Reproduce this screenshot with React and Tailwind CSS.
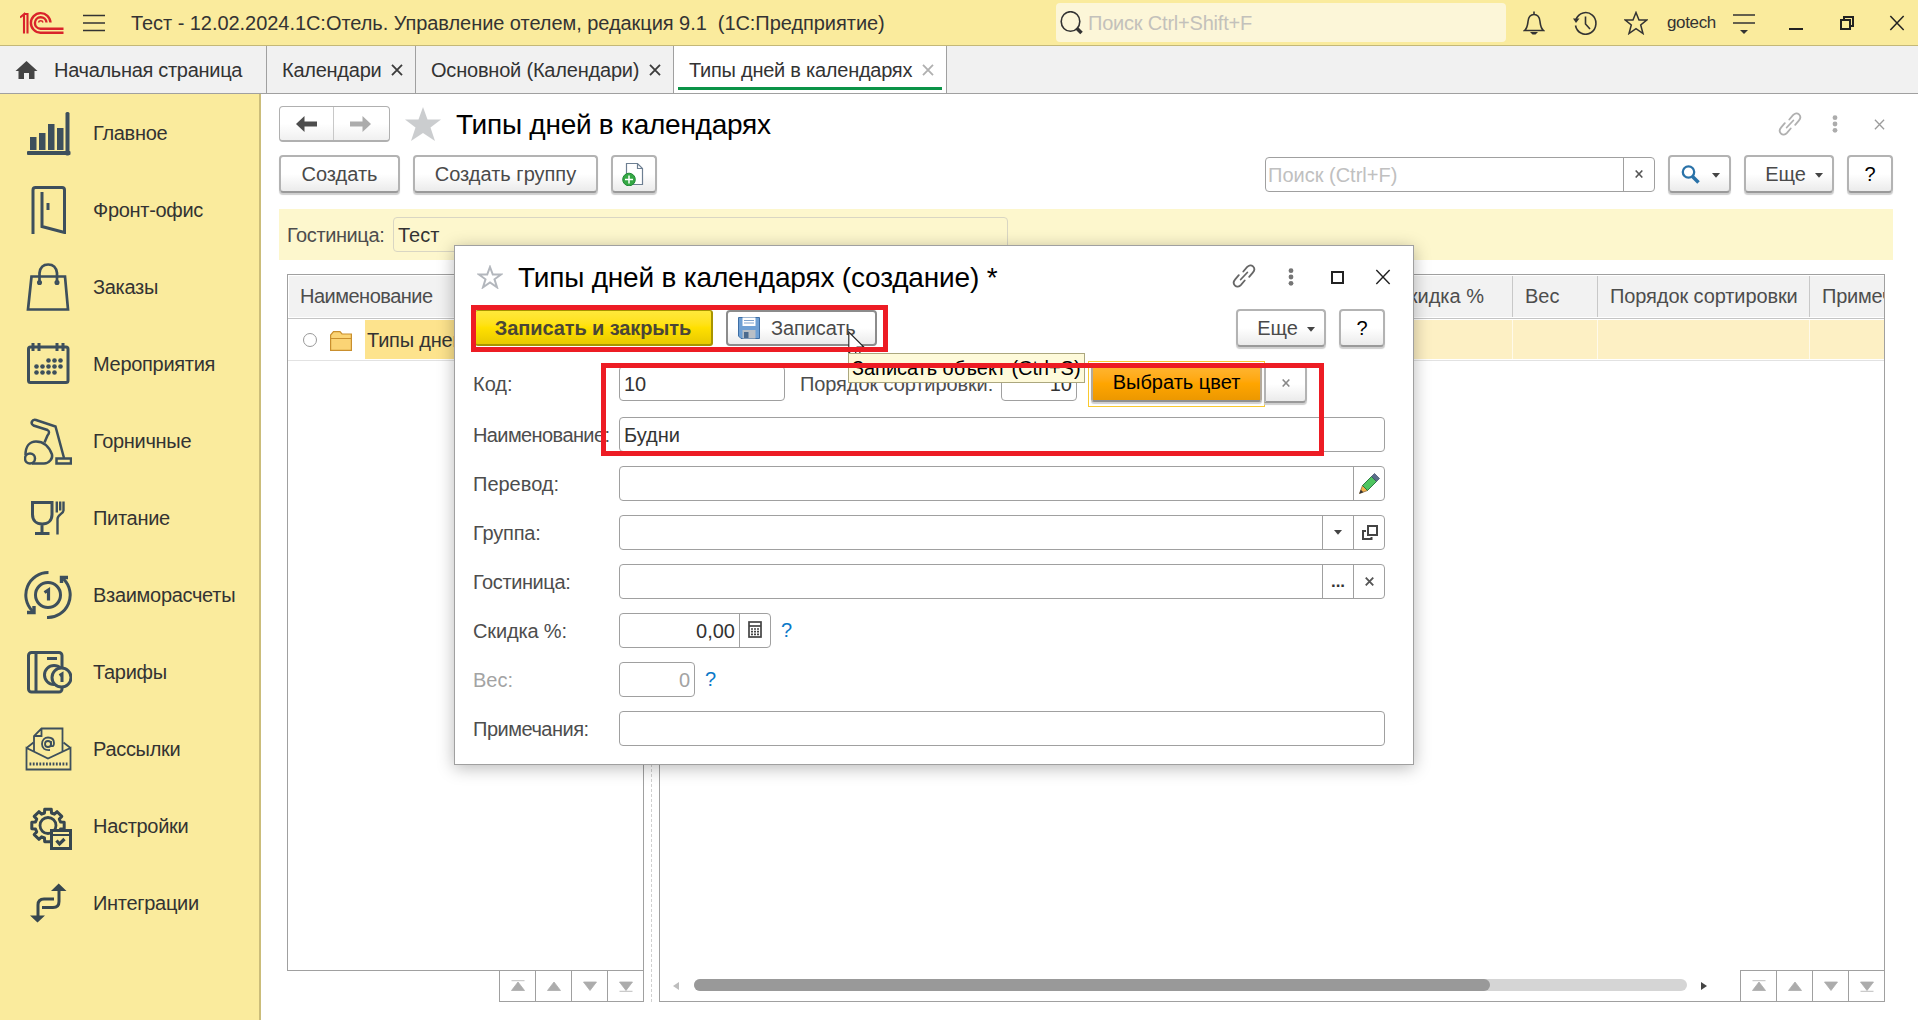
import React from "react";

const MENU = [
    { label: "Главное", icon: "chart" },
    { label: "Фронт-офис", icon: "door" },
    { label: "Заказы", icon: "bag" },
    { label: "Мероприятия", icon: "calendar" },
    { label: "Горничные", icon: "vacuum" },
    { label: "Питание", icon: "food" },
    { label: "Взаиморасчеты", icon: "settlement" },
    { label: "Тарифы", icon: "tariff" },
    { label: "Рассылки", icon: "mail" },
    { label: "Настройки", icon: "gear" },
    { label: "Интеграции", icon: "integration" },
];

// outline of a gear with eight teeth
const gearPath = (cx, cy, inner, outer) => {
    const points = [];
    for (let i = 0; i < 8; i++) {
        const a = (i * Math.PI) / 4;
        [[-0.27, inner], [-0.2, outer], [0.2, outer], [0.27, inner]].forEach(([shift, r]) => {
            points.push(`${(cx + r * Math.sin(a + shift)).toFixed(1)} ${(cy - r * Math.cos(a + shift)).toFixed(1)}`);
        });
    }
    return `M${points.join("L")}z`;
};

const MENU_ICONS = {
    chart: (
        <g fill="#3d4f5c" stroke="none">
            <rect x="6" y="28" width="6.500" height="13" />
            <rect x="15" y="24" width="6.500" height="17" />
            <rect x="24" y="15" width="6.500" height="26" />
            <rect x="33" y="19" width="6.500" height="22" />
            <rect x="41.500" y="3" width="4" height="43.500" rx="1.500" />
            <rect x="3" y="42" width="43.500" height="4" rx="1" />
        </g>
    ),
    door: (
        <g>
            <path d="M9 48V4q0-2.500 2.500-2.500h26.500q2.500 0 2.500 2.500v42.500L18 40.500V6" />
            <path d="M24 17v7" strokeWidth="3" />
        </g>
    ),
    bag: (
        <g strokeWidth="2.700">
            <path d="M7.500 13.500h33.500L44 46.500H4z" />
            <path d="M15.500 19v-9q1-8.500 8.700-8.500T33 10v9" />
            <circle cx="15.500" cy="19.500" r="1.200" />
            <circle cx="33" cy="19.500" r="1.200" />
        </g>
    ),
    calendar: (
        <g>
            <rect x="4.500" y="7" width="39.500" height="35.500" rx="2" />
            <path d="M9 3v8M15 3v8M33 3v8M39 3v8" />
            <g fill="#3d4f5c" stroke="none">
                {[24.5, 30.5, 36.5].map((x) => <circle key={x} cx={x} cy="20.500" r="2.300" />)}
                {[12.5, 18.5, 24.5, 30.5, 36.5].map((x) => <circle key={x} cx={x} cy="26.500" r="2.300" />)}
                {[12.5, 18.5, 24.5, 30.5].map((x) => <circle key={x} cx={x} cy="32.500" r="2.300" />)}
            </g>
        </g>
    ),
    vacuum: (
        <g strokeWidth="2.500">
            <path d="M40 41L31.500 9.500 12 3C8 2 6 6.500 9.500 8.500l14 4.500c2 1 2 3 0 5.500l-3 7" />
            <path d="M1.500 38C1.500 29 6 24.500 12 24.500c8 0 13 5 16 13 1 4-3 9-8 9H8" />
            <circle cx="6" cy="41.500" r="5" />
            <path d="M32.500 41.500h14.500v5H32.500z" />
        </g>
    ),
    food: (
        <g>
            <path d="M8.500 8.500h19.500v12c0 6-4 9.500-9.800 9.500S8.500 26.500 8.500 20.500zM18 30v9M11 39.500h14.500" />
            <path d="M32.800 7.500v11M39.500 7.500v9c0 3-6 4-6 8.500v15.500M36.200 7.500v9" strokeWidth="2.400" />
        </g>
    ),
    settlement: (
        <g>
            <circle cx="24" cy="24" r="12.500" />
            <path d="M24.500 1.500A22.500 22.500 0 0 0 8.500 40M23 46.500A22.500 22.500 0 0 0 39.500 8" />
            <path d="M37.500 12V6.500H44M10 35v6.500H3" strokeWidth="3.400" />
            <path d="M20.500 21.500L24.500 19v10.500" strokeWidth="3.200" />
        </g>
    ),
    tariff: (
        <g>
            <rect x="4.500" y="4.500" width="33.500" height="39.500" rx="3" />
            <path d="M12 4.500V44M23 10.500h10" />
            <circle cx="30" cy="27" r="9.500" fill="#faeb9d" />
            <circle cx="37.500" cy="29.500" r="9.500" fill="#faeb9d" />
            <path d="M35.500 27.500l2.500-1.500v8" />
        </g>
    ),
    mail: (
        <g strokeWidth="1.800">
            <path d="M2.500 23v21.500h44V23L24 33.500zM2.500 23l7-5.500M46.500 23l-7-5.500" />
            <path d="M10 26V11l7.500-7.500h21V26M17.500 3.500V11H10" />
            <path d="M5.500 39h38" strokeWidth="3" strokeDasharray="1.800 1.500" />
            <circle cx="24" cy="19" r="3" />
            <path d="M27 16v5q3 1 3-3c0-4-3-5.500-6-5.500s-6 2-6 6.500 3 6.500 8 6" />
        </g>
    ),
    gear: (
        <g stroke="#37474f">
            <path d={gearPath(24, 23.5, 13, 16.5)} strokeWidth="3" strokeLinejoin="round" />
            <circle cx="24" cy="23.500" r="8" strokeWidth="2.800" />
            <rect x="27.500" y="28.500" width="19" height="18" fill="#faeb9d" strokeWidth="3" />
            <path d="M27.500 33h19" strokeWidth="2" />
            <path d="M32.500 38.500l3 3.500 5-5" strokeWidth="3.200" />
        </g>
    ),
    integration: (
        <g stroke="#37474f">
            <path d="M30 20H20q-6 0-6 6v11M18 28.500h11q6 0 6-6V11" strokeWidth="3" />
            <path d="M34.700 4.500L42.500 12H27zM13.500 43.500L6 36.500h15z" fill="#37474f" stroke="none" />
        </g>
    ),
};

const MenuIcon = ({ name }) => (
    <svg width="48" height="48" viewBox="0 0 48 48" fill="none" stroke="#3d4f5c" strokeWidth="3">
        {MENU_ICONS[name]}
    </svg>
);

const Cross = ({ size = 12, color = "#3c3c3c", width = 1.8 }) => (
    <svg width={size} height={size} viewBox="0 0 12 12" className="shrink-0" stroke={color} strokeWidth={(width * 12) / size}>
        <path d="M1 .8l10 10.400M11 .8L1 11.200" />
    </svg>
);

const LinkIcon = ({ color }) => (
    <svg width="24" height="24" viewBox="0 0 24 24" fill="none" stroke={color} strokeWidth="1.800" strokeLinecap="round">
        <path d="M11.300 7.500l3.700-4.300c2-2.200 4.300-2.400 6-.8s1.700 4-.2 6.200l-3.600 4.200M12.700 16.500L9 20.800c-2 2.200-4.300 2.400-6 .8s-1.700-4 .2-6.200l3.600-4.200M8.700 15.500l6.600-7" />
    </svg>
);

const Dots = ({ color }) => (
    <svg width="6" height="18" viewBox="0 0 6 18" fill={color}>
        <circle cx="3" cy="2.700" r="2.400" />
        <circle cx="3" cy="9" r="2.400" />
        <circle cx="3" cy="15.300" r="2.400" />
    </svg>
);

const Caret = ({ className = "" }) => (
    <svg width="8" height="5" viewBox="0 0 8 5" fill="#444" className={className}>
        <path d="M0 0h8L4 4.800z" />
    </svg>
);

const Button = ({ className = "", children }) => (
    <button
        className={`flex h-[38px] shrink-0 items-center justify-center rounded-[4px] border-2 border-[#b3b3b3] border-b-[#9a9a9a] bg-gradient-to-b from-white from-50% to-[#ebebeb] text-[#4a4a4a] shadow-[0_2px_1px_#cfcfcf] ${className}`}
    >
        {children}
    </button>
);

const PAGER_ARROWS = [
    "M13 2l6.500 8.500h-13z M6.500 .7h13",
    "M13 2l6.500 8.500h-13z",
    "M13 10.500L6.500 2h13z",
    "M13 10.500L6.500 2h13z M6.500 11.300h13",
];

const PagerButtons = () => (
    <div className="flex h-[32px] w-[145px] divide-x divide-[#a0a0a0] border border-[#a0a0a0] bg-white">
        {PAGER_ARROWS.map((d) => (
            <div key={d} className="flex flex-1 items-center justify-center">
                <svg width="26" height="12" viewBox="0 0 26 12" fill="#acacac" stroke="#acacac" strokeWidth=".8">
                    <path d={d} />
                </svg>
            </div>
        ))}
    </div>
);

function TitleBar() {
    return (
        <header className="flex h-[46px] shrink-0 items-center border-b border-[#c4b878] bg-[#faeb9d]">
            <svg width="44" height="24" viewBox="0 0 44 24" fill="none" stroke="#d9232b" strokeWidth="2.400" className="ml-[20px]">
                <path d="M0 6.500l4-3.300v19.300M3.500 3h4v19.500" strokeWidth="2.100" />
                <path d="M30.500 11.500A9.800 9.800 0 1 0 20.500 21.700H43.500" />
                <path d="M26.500 11.500a5.800 5.800 0 1 0-6 6.300H43.500" />
                <path d="M23 11.500a2.300 2.300 0 0 0-4.500 0" strokeWidth="1.500" />
            </svg>
            <svg width="22" height="18" viewBox="0 0 22 18" stroke="#333" strokeWidth="1.600" className="ml-[19px]">
                <path d="M0 1.500h22M0 9h22M0 16.500h22" />
            </svg>
            <h1 className="ml-[26px] w-[925px] whitespace-pre tracking-[-0.05px]">
                {"Тест - 12.02.2024.1С:Отель. Управление отелем, редакция 9.1  (1С:Предприятие)"}
            </h1>
            <div className="flex h-[39px] w-[450px] items-center gap-[5px] rounded-[4px] bg-[#fcf6d8] pl-[4px] text-[#c3c1bb]">
                <svg width="23" height="24" viewBox="0 0 23 24" fill="none" stroke="#333">
                    <ellipse cx="10.500" cy="10.500" rx="9.300" ry="9.800" strokeWidth="1.600" />
                    <path d="M16.500 17l5 5" strokeWidth="3.500" />
                </svg>
                <span className="tracking-[-0.2px]">Поиск Ctrl+Shift+F</span>
            </div>
            <svg width="22" height="24" viewBox="0 0 22 24" fill="none" stroke="#333" strokeWidth="1.600" className="ml-[17px]">
                <path d="M11 .5v2.500M1.500 19.500h19c-3-2.500-3-5-3.500-9-.5-5-3-7-6-7s-5.500 2-6 7c-.5 4-.5 6.500-3.500 9z" />
                <path d="M7 21h8l-2.500 2.500h-3z" fill="#333" stroke="none" />
            </svg>
            <svg width="24" height="24" viewBox="0 0 24 24" fill="none" stroke="#333" strokeWidth="1.600" className="ml-[28px]">
                <path d="M3 8.500a10.300 10.800 0 1 1-.5 6M12.500 5.500V13l4.500 5" />
                <path d="M0 7.500h6.500L3 12z" fill="#333" stroke="none" />
            </svg>
            <svg width="24" height="24" viewBox="0 0 24 24" fill="none" stroke="#333" strokeWidth="1.500" className="ml-[27px]">
                <path d="M12 1.500l3 7.500h7.700l-6 5 2.300 8.500L12 17.700 5 22.500 7.300 14l-6-5H9z" />
            </svg>
            <span className="ml-[19px] w-[66px] text-[17px] tracking-[-0.35px]">gotech</span>
            <svg width="22" height="20" viewBox="0 0 22 20" stroke="#333" strokeWidth="1.600" className="mt-[2px]">
                <path d="M0 1h22M0 9h22" />
                <path d="M7 16h8l-4 4z" fill="#333" stroke="none" />
            </svg>
            <span className="mt-[13px] ml-[34px] h-[2px] w-[14px] bg-[#222]" />
            <svg width="14" height="14" viewBox="0 0 14 14" fill="none" stroke="#222" strokeWidth="2" className="ml-[37px]">
                <path d="M1 4h9v9H1zM4 3.500V1h9v9h-3" />
            </svg>
            <span className="ml-[35px]">
                <Cross size={16} color="#222" width={1.5} />
            </span>
        </header>
    );
}

function Tabs() {
    return (
        <nav className="flex h-[48px] shrink-0 border-b border-[#a0a0a0] bg-[#f1f1f1]">
            <div className="flex w-[267px] items-center gap-[16px] border-r border-[#a0a0a0] pl-[15px]">
                <svg width="23" height="18" viewBox="0 0 22 18" fill="#444">
                    <path d="M11 0L0 10h3v8h5.500v-6h5v6H19v-8h3z" />
                </svg>
                <span className="tracking-[-0.3px]">Начальная страница</span>
            </div>
            <div className="flex w-[149px] items-center border-r border-[#a0a0a0] pl-[15px]">
                <span className="w-[109px] tracking-[-0.25px]">Календари</span>
                <Cross />
            </div>
            <div className="flex w-[258px] items-center border-r border-[#a0a0a0] pl-[15px]">
                <span className="w-[218px] tracking-[-0.2px]">Основной (Календари)</span>
                <Cross />
            </div>
            <div className="flex w-[273px] flex-col border-r border-[#a0a0a0] bg-white px-[4px]">
                <div className="flex h-[44px] items-center border-b-[3px] border-[#0b9347] pt-[6px] pl-[11px]">
                    <span className="w-[233px] tracking-[-0.25px]">Типы дней в календарях</span>
                    <Cross color="#b0b0b0" />
                </div>
            </div>
        </nav>
    );
}

function Sidebar() {
    return (
        <aside className="w-[261px] shrink-0 border-r-2 border-[#cbbd7a] bg-[#faeb9d]">
            {MENU.map((item) => (
                <div key={item.label} className="flex h-[77px] items-center gap-[21px] pl-[24px]">
                    <MenuIcon name={item.icon} />
                    <span className="tracking-[-0.3px]">{item.label}</span>
                </div>
            ))}
        </aside>
    );
}

function ListPage() {
    return (
        <main className="flex min-w-0 flex-1 flex-col pt-[12px] pr-[25px] pl-[18px]">
            <div className="flex h-[36px] items-center">
                <div className="flex h-[36px] w-[111px] rounded-[4px] border border-[#b0b0b0] border-b-2 bg-gradient-to-b from-white from-50% to-[#f0f0f0]">
                    <div className="flex flex-1 items-center justify-center border-r border-[#c8c8c8]">
                        <svg width="21" height="16" viewBox="0 0 21 16" fill="#4d4d4d">
                            <path d="M0 8l8.500-8v5.500H21v5H8.500V16z" />
                        </svg>
                    </div>
                    <div className="flex flex-1 items-center justify-center pr-[2px]">
                        <svg width="21" height="16" viewBox="0 0 21 16" fill="#acacac">
                            <path d="M21 8l-8.500-8v5.500H0v5h12.500V16z" />
                        </svg>
                    </div>
                </div>
                <svg width="36" height="34" viewBox="0 0 36 34" fill="#cbcdcf" className="ml-[15px]">
                    <path d="M18 0l4.500 12.500H36L25.500 20.500 30 34l-12-8-12 8 4.500-13.500L0 12.500h13.500z" />
                </svg>
                <h2 className="ml-[15px] flex-1 pt-[2px] text-[28px] leading-none tracking-[-0.25px] text-black">Типы дней в календарях</h2>
                <div className="flex items-center pr-[8px]">
                    <LinkIcon color="#b0b0b0" />
                    <span className="mr-[36px] ml-[30px]">
                        <Dots color="#acacac" />
                    </span>
                    <Cross size={11} color="#9c9c9c" width={1.3} />
                </div>
            </div>

            <div className="mt-[13px] flex h-[38px] items-center gap-[13px]">
                <Button className="w-[121px]">Создать</Button>
                <Button className="w-[185px]">Создать группу</Button>
                <Button className="w-[46px]">
                    <svg width="22" height="24" viewBox="0 0 22 24" fill="none" className="ml-[-2px]">
                        <path d="M4.500 1.500h11l5 5v16h-16zM15.500 1.500v5h5" fill="#fff" stroke="#6d7f92" strokeWidth="1.200" />
                        <circle cx="7" cy="17.500" r="6.300" fill="#35a844" stroke="#1f8a35" />
                        <path d="M7 13.500v8M3 17.500h8" stroke="#fff" strokeWidth="1.500" />
                    </svg>
                </Button>
                <div className="ml-auto flex h-[35px] w-[390px] divide-x divide-[#a0a0a0] rounded-[4px] border border-[#a0a0a0]">
                    <span className="flex flex-1 items-center pt-[2px] pl-[2px] text-[#c0c0c0]">Поиск (Ctrl+F)</span>
                    <span className="flex w-[30px] items-center justify-center">
                        <Cross size={8} color="#555" width={1.6} />
                    </span>
                </div>
                <Button className="w-[63px] gap-[12px]">
                    <svg width="19" height="19" viewBox="0 0 19 19" fill="none" stroke="#2a72a8" className="ml-[2px]">
                        <circle cx="7.500" cy="7" r="5.700" strokeWidth="2.300" />
                        <path d="M11.500 11.500l6 6" strokeWidth="3.500" />
                    </svg>
                    <Caret className="mt-[3px]" />
                </Button>
                <Button className="w-[90px] gap-[9px] pl-[10px]">
                    Еще
                    <Caret className="mt-[3px]" />
                </Button>
                <Button className="w-[46px] text-black">?</Button>
            </div>

            <div className="mt-[16px] flex h-[51px] items-center bg-[#fdf7cd] pl-[8px]">
                <span className="w-[106px] tracking-[-0.4px] text-[#4d4d4d]">Гостиница:</span>
                <div className="flex h-[35px] w-[615px] items-center rounded-[4px] border border-[#d9d6c3] pl-[4px]">Тест</div>
            </div>

            <div className="mt-[14px] flex h-[728px] pr-[8px] pl-[8px]">
                <div className="flex w-[357px] flex-col items-end">
                    <div className="-mb-px h-[697px] w-full border border-[#a0a0a0]">
                        <div className="flex h-[44px] border-b border-[#c4c4c4] p-px">
                            <div className="flex flex-1 items-center bg-[#f2f2f2] pb-[2px] pl-[11px] tracking-[-0.5px] text-[#4d4d4d]">Наименование</div>
                        </div>
                        <div className="flex h-[42px] items-center border-b border-[#e2e2e2]">
                            <span className="ml-[15px] h-[14px] w-[14px] rounded-full border border-[#999]" />
                            <svg width="22" height="20" viewBox="0 0 22 20" className="mt-[3px] mr-[13px] ml-[13px]">
                                <path d="M.6 19.400V4L3.500.6H10L12 3h9.400v16.400z" fill="#fbd475" stroke="#c98f2e" strokeWidth="1.200" />
                                <path d="M1 7.500h20" stroke="#c98f2e" />
                            </svg>
                            <span className="flex h-[39px] flex-1 items-center overflow-hidden bg-[#fde38d] pl-[2px] tracking-[-0.2px]">Типы дней</span>
                        </div>
                    </div>
                    <PagerButtons />
                </div>
                <div className="w-[15px] pl-[7px]">
                    <div className="h-full w-0 border-l border-dashed border-[#d0d0d0]" />
                </div>
                <div className="flex flex-1 flex-col justify-between border border-[#a0a0a0]">
                    <div>
                        <div className="flex h-[44px] items-stretch border-b border-[#c4c4c4] pt-px pb-px text-[#4d4d4d]">
                            <div className="flex w-[853px] items-center justify-end border-r border-[#c8c8c8] bg-[#f2f2f2] pr-[28px] pb-[2px]">Скидка %</div>
                            <div className="flex w-[85px] items-center border-r border-[#c8c8c8] bg-[#f2f2f2] pb-[2px] pl-[12px]">Вес</div>
                            <div className="flex w-[212px] items-center border-r border-[#c8c8c8] bg-[#f2f2f2] pb-[2px] pl-[12px] tracking-[-0.1px]">Порядок сортировки</div>
                            <div className="flex w-0 flex-1 items-center overflow-hidden bg-[#f2f2f2] pb-[2px] pl-[12px] tracking-[-0.2px]">Примечания</div>
                        </div>
                        <div className="flex h-[42px] items-center border-b border-[#e2e2e2]">
                            <div className="h-[39px] w-[853px] border-r border-[#fffaea] bg-[#fdf0c4]" />
                            <div className="h-[39px] w-[85px] border-r border-[#fffaea] bg-[#fdf0c4]" />
                            <div className="h-[39px] w-[212px] border-r border-[#fffaea] bg-[#fdf0c4]" />
                            <div className="h-[39px] flex-1 bg-[#fdf0c4]" />
                        </div>
                    </div>
                    <div className="-mr-px -mb-px flex items-center">
                        <svg width="6" height="8" viewBox="0 0 6 8" fill="#bdbdbd" className="mb-[1px] ml-[13px]">
                            <path d="M6 0v8L0 4z" />
                        </svg>
                        <div className="mb-[2px] ml-[15px] h-[12px] w-[993px] rounded-full bg-[#d5d5d5]">
                            <div className="h-full w-[796px] rounded-full bg-[#999]" />
                        </div>
                        <svg width="6" height="8" viewBox="0 0 6 8" fill="#444" className="mr-auto mb-[1px] ml-[14px]">
                            <path d="M0 0v8l6-4z" />
                        </svg>
                        <PagerButtons />
                    </div>
                </div>
            </div>
        </main>
    );
}

const Field = ({ className = "", children, buttons = [] }) => (
    <div className={`flex h-[35px] divide-x divide-[#a0a0a0] rounded-[4px] border border-[#a0a0a0] bg-white ${className}`}>
        <span className="flex flex-1 items-center pr-[4px] pl-[4px]">{children}</span>
        {buttons.map((button, i) => (
            <span key={i} className="flex w-[31px] items-center justify-center last:w-[30px]">
                {button}
            </span>
        ))}
    </div>
);

const FormRow = ({ label, labelClass = "text-[#4d4d4d]", children }) => (
    <div className="flex h-[35px] items-center">
        <label className={`w-[146px] shrink-0 whitespace-nowrap ${labelClass}`}>{label}</label>
        {children}
    </div>
);

const PencilIcon = (
    <svg width="21" height="21" viewBox="0 0 21 21">
        <path d="M.5 20.500l3-8 5 5z" fill="#f3b04c" stroke="#7a5a2a" strokeWidth=".7" />
        <path d="M.3 20.700l1.500-4 2.500 2.500z" fill="#333" />
        <path d="M3.500 12.500l9-9 5 5-9 9z" fill="#4fc560" stroke="#23703a" strokeWidth=".9" />
        <path d="M12.500 3.500l3-3 5 5-3 3z" fill="#5b6f8c" stroke="#3d4b61" strokeWidth=".7" />
    </svg>
);

const OpenIcon = (
    <svg width="16" height="15" viewBox="0 0 16 15" fill="none" stroke="#444" strokeWidth="2" className="ml-[2px]">
        <path d="M6 1h9v9H6zM4 6H1v8h8.500v-2" />
    </svg>
);

const CalcIcon = (
    <svg width="14" height="17" viewBox="0 0 14 17" fill="none" stroke="#444" strokeWidth="1.700" className="mb-[2px]">
        <rect x="1" y="1" width="12" height="15" />
        <path d="M1 5h12" />
        <path d="M3 8h8M3 10.700h8M3 13.400h8" strokeDasharray="2 1" />
    </svg>
);

function CreateDialog() {
    return (
        <section className="absolute top-[245px] left-[454px] h-[520px] w-[960px] border border-[#a0a0a0] bg-white pl-[18px] shadow-[0_3px_16px_rgba(0,0,0,0.28)]">
            <div className="flex h-[62px] items-center">
                <svg width="26" height="24" viewBox="0 0 26 24" fill="none" stroke="#b3b7bd" strokeWidth="2" className="ml-[4px]">
                    <path d="M13 2l2.800 7.500H24l-6.500 4.800 2.500 8-7-4.800-7 4.800 2.500-8L2 9.500h8.200z" />
                </svg>
                <h3 className="ml-[15px] flex-1 pt-[2px] text-[28px] leading-none tracking-[-0.18px] text-black">
                    Типы дней в календарях (создание) *
                </h3>
                <span className="mb-[2px]">
                    <LinkIcon color="#666" />
                </span>
                <span className="mr-[37px] ml-[32px]">
                    <Dots color="#757575" />
                </span>
                <span className="mr-[31px] h-[13px] w-[13px] border-2 border-[#222]" />
                <span className="mr-[22px] mb-[1px]">
                    <Cross size={16} color="#222" width={1.4} />
                </span>
            </div>

            <div className="mt-[1px] flex h-[38px] items-center">
                <button className="ml-[2px] h-[36px] w-[238px] rounded-[3px] border-t border-r-2 border-b-2 border-[#a89400] bg-gradient-to-b from-[#ffe93a] via-[#ffe000] to-[#e8c900] font-bold tracking-[-0.1px] text-[#4a4637]">
                    Записать и закрыть
                </button>
                <button className="ml-[13px] flex h-[36px] w-[151px] items-center rounded-[4px] border-2 border-[#8c8c8c] bg-gradient-to-b from-white from-50% to-[#ebebeb] pl-[10px] text-[#4a4a4a]">
                    <svg width="22" height="22" viewBox="0 0 22 22" className="mr-[11px]">
                        <path d="M.5.5h21v21H3L.5 19z" fill="#6fa0d4" stroke="#3d6ea5" />
                        <path d="M4.500.5h13v8.500h-13z" fill="#fff" />
                        <path d="M6 3.500h10M6 6h10" stroke="#7fa3cc" />
                        <path d="M4.500 13h13v8.500h-13z" fill="#b9bfc6" />
                        <path d="M6 15h4.500v6H6z" fill="#4b6a8e" />
                    </svg>
                    <span className="tracking-[-0.1px]">Записать</span>
                </button>
                <Button className="ml-auto w-[90px] gap-[9px] pl-[10px]">
                    Еще
                    <Caret className="mt-[3px]" />
                </Button>
                <Button className="mr-[28px] ml-[13px] w-[46px] text-black">?</Button>
            </div>

            <div className="mt-[19px] flex w-[912px] flex-col gap-[14px]">
                <div className="mb-[2px] flex h-[35px] items-center">
                    <label className="w-[146px] text-[#4d4d4d]">Код:</label>
                    <Field className="w-[166px]">10</Field>
                    <label className="w-[216px] pl-[15px] tracking-[-0.1px] whitespace-nowrap text-[#4d4d4d]">Порядок сортировки:</label>
                    <Field className="w-[76px] text-right">
                        <span className="w-full">10</span>
                    </Field>
                    <div className="-my-[6px] ml-[11px] flex h-[46px] w-[177px] items-center border border-[#f9c92e] pl-[2px]">
                        <button className="h-[37px] w-[171px] rounded-[3px] border-2 border-[#b3a99a] border-b-[#8f8f8f] bg-gradient-to-b from-[#ffb52e] via-[#ffa500] to-[#ec9800] pb-[3px] text-black shadow-[0_2px_1px_#cfcfcf]">
                            Выбрать цвет
                        </button>
                    </div>
                    <Button className="-ml-px h-[36px] w-[43px] rounded-l-none pb-[2px]">
                        <Cross size={8} color="#888" width={1.6} />
                    </Button>
                </div>
                <FormRow label="Наименование:" labelClass="tracking-[-0.6px] text-[#4d4d4d]">
                    <Field className="flex-1">Будни</Field>
                </FormRow>
                <FormRow label="Перевод:">
                    <Field className="flex-1" buttons={[PencilIcon]} />
                </FormRow>
                <FormRow label="Группа:" labelClass="tracking-[-0.2px] text-[#4d4d4d]">
                    <Field className="flex-1" buttons={[<Caret />, OpenIcon]} />
                </FormRow>
                <FormRow label="Гостиница:" labelClass="tracking-[-0.4px] text-[#4d4d4d]">
                    <Field className="flex-1" buttons={[<b className="text-[17px]">...</b>, <Cross size={9} color="#555" />]} />
                </FormRow>
                <FormRow label="Скидка %:" labelClass="tracking-[-0.15px] text-[#4d4d4d]">
                    <Field className="w-[152px] text-right" buttons={[CalcIcon]}>
                        <span className="w-full">0,00</span>
                    </Field>
                    <span className="mb-[2px] ml-[10px] text-[#0a78c8]">?</span>
                </FormRow>
                <FormRow label="Вес:" labelClass="text-[#a3a3a3]">
                    <Field className="w-[76px] text-right text-[#a3a3a3]">
                        <span className="w-full">0</span>
                    </Field>
                    <span className="mb-[2px] ml-[10px] text-[#0a78c8]">?</span>
                </FormRow>
                <FormRow label="Примечания:" labelClass="tracking-[-0.5px] text-[#4d4d4d]">
                    <Field className="flex-1" />
                </FormRow>
            </div>
        </section>
    );
}

export default function App() {
    return (
        <div className="relative flex h-[1020px] w-[1918px] flex-col overflow-hidden bg-white font-['Liberation_Sans',Arial,sans-serif] text-[20px] leading-none text-[#333]">
            <TitleBar />
            <Tabs />
            <div className="flex min-h-0 flex-1">
                <Sidebar />
                <ListPage />
            </div>

            <CreateDialog />

            {/* pointer, hint and highlight frames */}
            <svg width="18" height="28" viewBox="0 0 18 28" className="absolute top-[331px] left-[848px]">
                <path d="M.8 1v21l5-4.500 4 8.500 3.500-1.500-4-8.500h6.500z" fill="#fff" stroke="#222" strokeWidth="1.100" />
            </svg>
            <div className="absolute top-[353px] left-[848px] flex h-[30px] w-[237px] items-center border border-[#aca77e] bg-[#fefada] pl-[3px] tracking-[-0.05px] whitespace-nowrap text-black">
                Записать объект (Ctrl+S)
            </div>
            <div className="absolute top-[305px] left-[471px] h-[47px] w-[417px] border-[5px] border-[#ed1c24]" />
            <div className="absolute top-[363px] left-[601px] h-[93px] w-[723px] border-[5px] border-[#ed1c24]" />
        </div>
    );
}
